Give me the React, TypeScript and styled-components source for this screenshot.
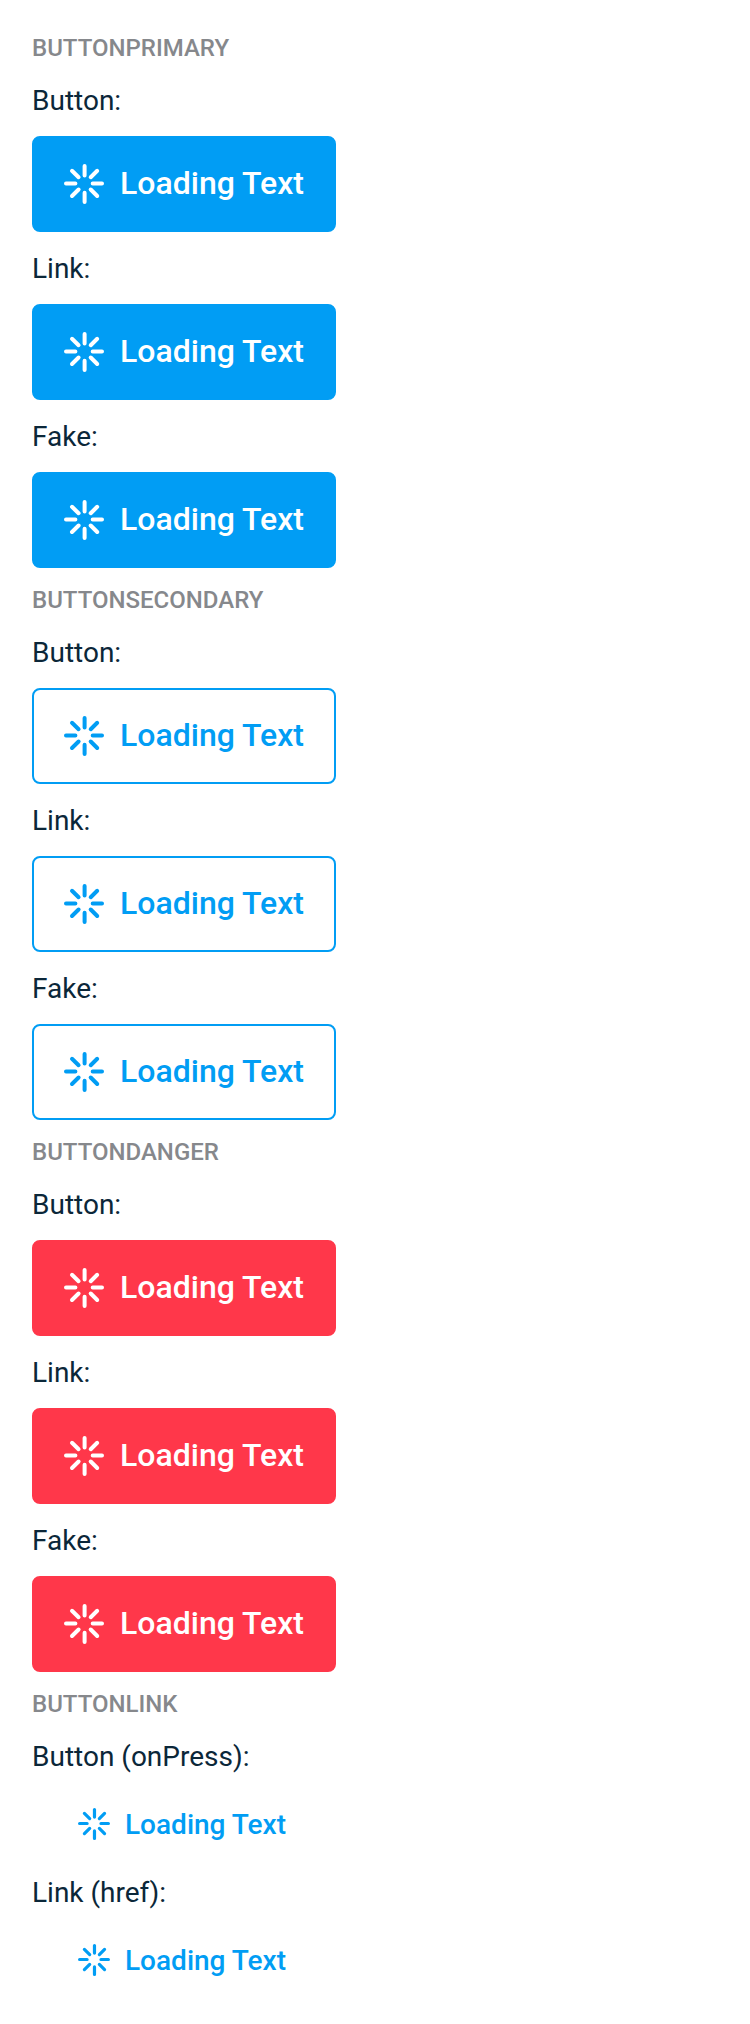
import React from 'react';
import styled, { createGlobalStyle, css } from 'styled-components';

type Variant = 'primary' | 'secondary' | 'danger';

const colors = {
  blue: '#019df4',
  red: '#ff374a',
  white: '#ffffff',
  text: '#0b2739',
  muted: '#86888c',
};

const GlobalStyle = createGlobalStyle`
  body {
    margin: 0;
    background: ${colors.white};
    font-family: Roboto, sans-serif;
  }
`;

const Page = styled.main`
  padding: 32px;
  display: flex;
  flex-direction: column;
`;

const Section = styled.section`
  display: flex;
  flex-direction: column;
  align-items: flex-start;

  & + & {
    padding-top: 16px;
  }
`;

const Title = styled.h2`
  margin: 0;
  font-size: 24px;
  line-height: 32px;
  font-weight: 500;
  text-transform: uppercase;
  color: ${colors.muted};
`;

const Label = styled.p`
  margin: 0;
  padding: 17px 0 15px;
  font-size: 28px;
  line-height: 40px;
  color: ${colors.text};
`;

const variants = {
  primary: css`
    color: ${colors.white};
    background: ${colors.blue};
    border-color: ${colors.blue};
  `,
  secondary: css`
    color: ${colors.blue};
    background: transparent;
    border-color: ${colors.blue};
  `,
  danger: css`
    color: ${colors.white};
    background: ${colors.red};
    border-color: ${colors.red};
  `,
};

const Button = styled.button<{ $variant: Variant }>`
  box-sizing: border-box;
  display: inline-flex;
  align-items: center;
  gap: 16px;
  width: 304px;
  height: 96px;
  padding: 0 30px;
  border: 2px solid;
  border-radius: 8px;
  font: 500 32px/48px Roboto, sans-serif;
  text-decoration: none;
  white-space: nowrap;
  ${(p) => variants[p.$variant]}
`;

const LinkButton = styled.button`
  box-sizing: border-box;
  display: inline-flex;
  align-items: center;
  gap: 15px;
  height: 64px;
  padding: 0 12px;
  margin-left: 34px;
  border: 0;
  background: transparent;
  font: 500 28px/40px Roboto, sans-serif;
  color: ${colors.blue};
  text-decoration: none;
  white-space: nowrap;
`;

const ButtonText = styled.span`
  padding-bottom: 2px;
`;

const LinkText = styled.span`
  padding-top: 2px;
`;

const SpinnerIcon = styled.svg`
  flex: none;
  fill: none;
  stroke: currentColor;
  stroke-width: 4;
  stroke-linecap: round;
`;

const Spinner = ({ size }: { size: number }) => (
  <SpinnerIcon width={size} height={size} viewBox="0 0 40 40" aria-hidden="true">
    <path d="M20.6 2v9.4M20.6 28.7V38M2 19.4h9.4M28.7 19.4H38" />
    <path d="M8 6.8l6.6 6.4M33.2 6.8l-6.5 6.4M8 32l6.6-6.5M33.2 32l-6.5-6.5" />
  </SpinnerIcon>
);

const groups: { title: string; variant: Variant }[] = [
  { title: 'ButtonPrimary', variant: 'primary' },
  { title: 'ButtonSecondary', variant: 'secondary' },
  { title: 'ButtonDanger', variant: 'danger' },
];

const kinds: { label: string; as: 'button' | 'a' | 'div' }[] = [
  { label: 'Button:', as: 'button' },
  { label: 'Link:', as: 'a' },
  { label: 'Fake:', as: 'div' },
];

const links: { label: string; as: 'button' | 'a' }[] = [
  { label: 'Button (onPress):', as: 'button' },
  { label: 'Link (href):', as: 'a' },
];

export default function App() {
  return (
    <>
      <GlobalStyle />
      <Page>
        {groups.map((group) => (
          <Section key={group.title}>
            <Title>{group.title}</Title>
            {kinds.map((kind) => (
              <React.Fragment key={kind.label}>
                <Label>{kind.label}</Label>
                <Button as={kind.as} $variant={group.variant}>
                  <Spinner size={40} />
                  <ButtonText>Loading Text</ButtonText>
                </Button>
              </React.Fragment>
            ))}
          </Section>
        ))}
        <Section>
          <Title>ButtonLink</Title>
          {links.map((link) => (
            <React.Fragment key={link.label}>
              <Label>{link.label}</Label>
              <LinkButton as={link.as}>
                <Spinner size={32} />
                <LinkText>Loading Text</LinkText>
              </LinkButton>
            </React.Fragment>
          ))}
        </Section>
      </Page>
    </>
  );
}
